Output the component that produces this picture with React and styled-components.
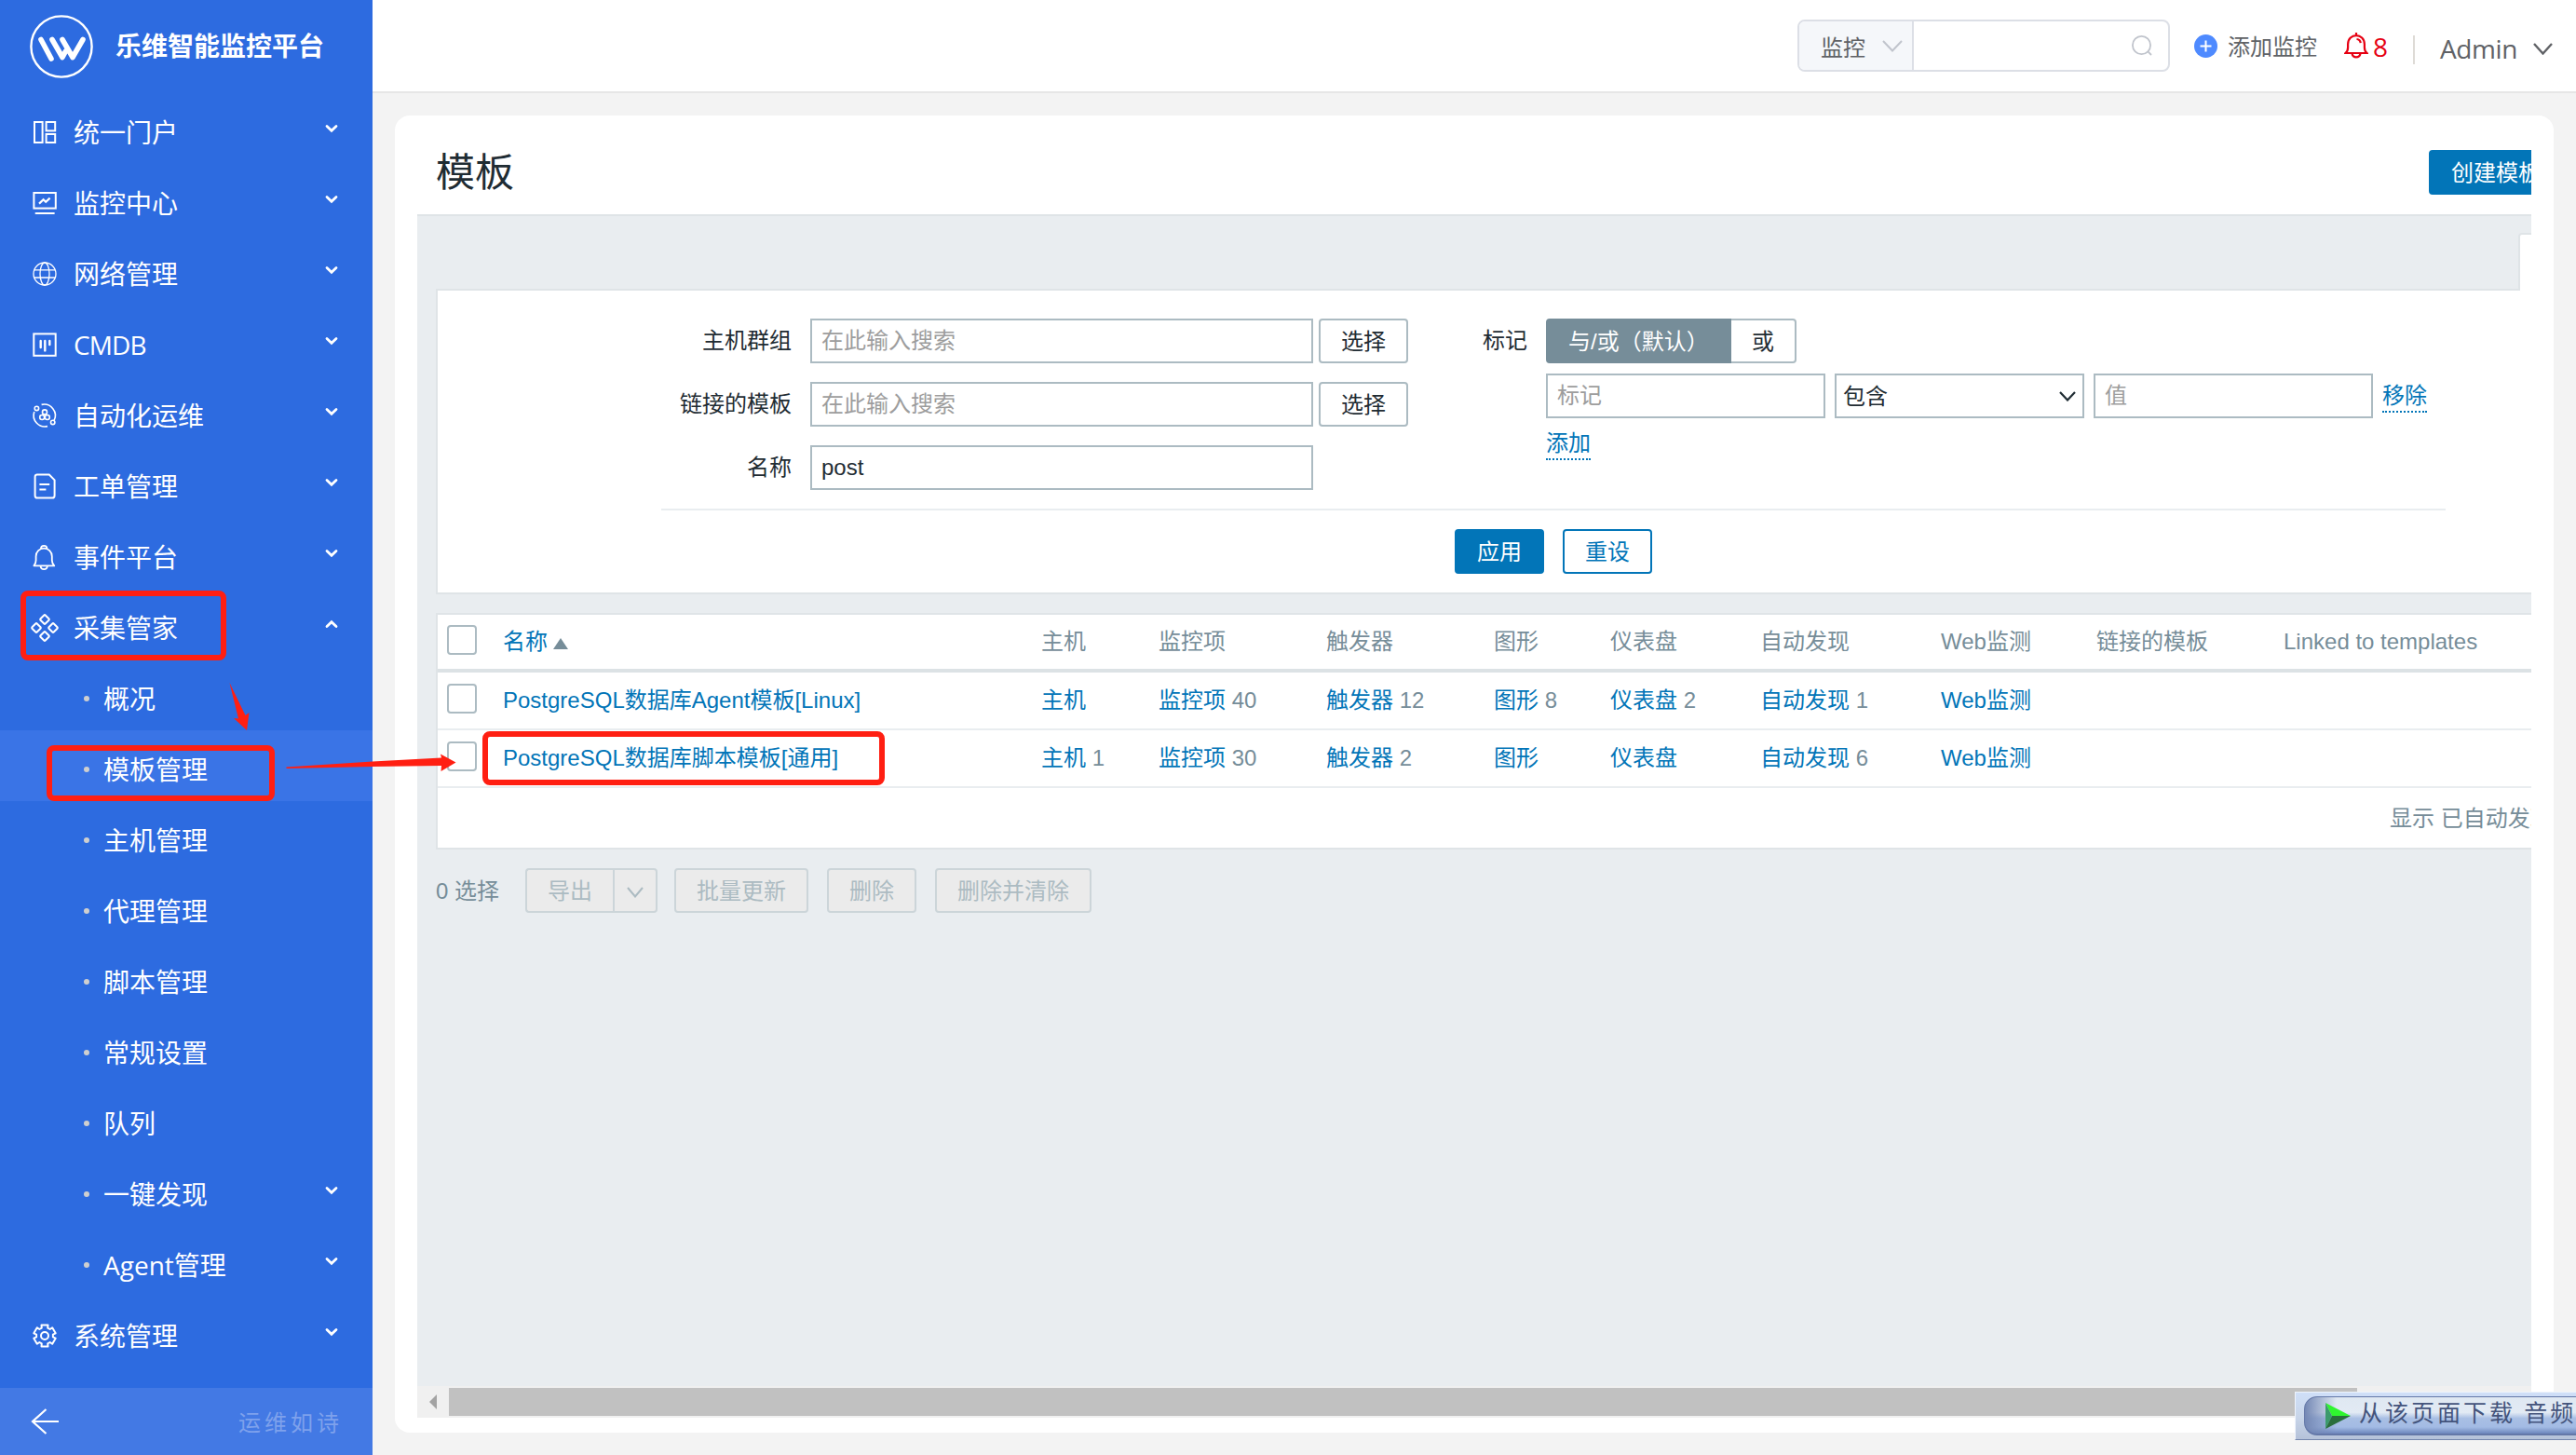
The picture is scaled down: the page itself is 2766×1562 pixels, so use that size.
import styled, { createGlobalStyle, css } from "styled-components";

const GlobalStyle = createGlobalStyle`
  * {
    box-sizing: border-box;
  }
  body {
    margin: 0;
    overflow: hidden;
    background: #f3f3f3;
    font-family: "Liberation Sans", "Noto Sans CJK SC", sans-serif;
    font-size: 24px;
  }
`;

const uiFont = css`
  font-family: "Open Sans", "Noto Sans CJK SC", sans-serif;
`;

const Page = styled.div`
  position: relative;
  display: flex;
  width: 2766px;
  height: 1562px;
  overflow: hidden;
`;

/* ---------- sidebar ---------- */

const Sidebar = styled.aside`
  ${uiFont}
  display: flex;
  flex-direction: column;
  flex: 0 0 400px;
  background: #2d6be0;
  color: #fff;
`;

const Brand = styled.div`
  display: flex;
  align-items: center;
  gap: 24px;
  height: 100px;
  padding-left: 32px;
  font-family: "Noto Sans CJK SC", sans-serif;
  font-size: 28px;
  font-weight: 700;
  line-height: 40px;
  white-space: nowrap;

  span {
    margin-top: -5px;
  }
`;

const MenuRow = styled.div`
  display: flex;
  align-items: center;
  height: 76px;
  padding: 0 36px 0 ${(p) => (p.$sub ? "90px" : "32px")};
  background: ${(p) => (p.$active ? "#3a74e6" : "transparent")};
`;

const MenuIcon = styled.svg`
  width: 32px;
  height: 32px;
  margin: 8px 15px 0 0;
  fill: none;
  stroke: currentColor;
  stroke-width: 2;
`;

const Dot = styled.i`
  width: 6px;
  height: 6px;
  margin: 7px 15px 0 0;
  border-radius: 50%;
  background: #cfcfcf;
`;

const MenuLabel = styled.span`
  flex: 1;
  padding-top: 8px;
  font-size: 28px;
  line-height: 40px;
  letter-spacing: ${(p) => (p.$latin ? "-0.9px" : "0")};
  white-space: nowrap;
`;

const MenuArrow = styled.svg`
  width: 16px;
  height: 10px;
  fill: none;
  stroke: #fff;
  stroke-width: 2.8;
  stroke-linecap: round;
  transform: ${(p) => (p.$open ? "rotate(180deg)" : "none")};
`;

const SidebarFooter = styled.div`
  display: flex;
  align-items: center;
  justify-content: space-between;
  height: 72px;
  margin-top: auto;
  padding: 0 32px 0 32px;
  background: #4379e4;
  color: #7ea1ec;
  line-height: 36px;
  letter-spacing: 4px;

  span {
    padding-top: 2px;
  }
`;

/* ---------- header ---------- */

const Main = styled.main`
  display: flex;
  flex-direction: column;
  flex: 1;
  min-width: 0;
`;

const Header = styled.header`
  ${uiFont}
  display: flex;
  align-items: center;
  justify-content: flex-end;
  height: 100px;
  padding-right: 25px;
  border-bottom: 2px solid #e6e6e6;
  background: #fff;
  color: #606266;
`;

const SearchGroup = styled.div`
  display: flex;
  width: 400px;
  height: 56px;
  margin-right: 26px;
  border: 2px solid #dcdfe6;
  border-radius: 8px;
  overflow: hidden;
`;

const SearchType = styled.div`
  display: flex;
  align-items: center;
  justify-content: space-between;
  width: 123px;
  padding: 0 10px 0 23px;
  border-right: 2px solid #dcdfe6;
  background: #f5f7fa;
`;

const SearchField = styled.div`
  display: flex;
  flex: 1;
  align-items: center;
  justify-content: flex-end;
  padding-right: 16px;
`;

const HeaderText = styled.span`
  font-size: ${(p) => p.$size || 24}px;
  line-height: 36px;
  padding-top: ${(p) => p.$top || 0}px;
  margin-right: ${(p) => p.$gap || 0}px;
  color: ${(p) => p.$color || "inherit"};
  letter-spacing: ${(p) => p.$spacing || 0}px;
`;

const HeaderIcon = styled.svg`
  margin-right: ${(p) => p.$gap || 0}px;
  flex: none;
`;

const Divider = styled.i`
  width: 2px;
  height: 31px;
  margin: 8px 27px 0 0;
  background: #dedbd6;
`;

/* ---------- content frame ---------- */

const Card = styled.section`
  display: flex;
  flex-direction: column;
  width: 2318px;
  height: 1414px;
  margin: 24px 0 0 24px;
  padding: 0 24px 16px;
  border-radius: 16px;
  background: #fff;
`;

const Frame = styled.div`
  flex: 1;
  overflow: hidden;
  background: #e9edf0;
`;

const FrameContent = styled.div`
  width: 2440px;
  color: #1f2c33;
`;

const TitleBar = styled.div`
  display: flex;
  align-items: center;
  justify-content: space-between;
  height: 108px;
  padding: 16px 136px 0 20px;
  border-bottom: 2px solid #dfe4e7;
  background: #fff;
`;

const Title = styled.h1`
  margin: 2px 0 0;
  font-size: 42px;
  font-weight: 400;
  line-height: 56px;
`;

const Button = styled.button`
  height: 48px;
  padding: 2px 22px 0;
  border: 2px solid ${(p) => p.$border || "#0275b8"};
  border-radius: 4px;
  background: ${(p) => p.$bg || "#fff"};
  color: ${(p) => p.$color || "#0275b8"};
  font: inherit;
  font-size: 24px;
  line-height: 40px;
  white-space: nowrap;
`;

const TabsBar = styled.div`
  display: flex;
  height: 78px;
  padding: 18px 20px 0 2256px;
`;

const FilterTab = styled.div`
  position: relative;
  width: 162px;
  height: 62px;
  border: 2px solid #dfe4e7;
  border-bottom: 0;
  border-radius: 4px 4px 0 0;
  background: #fff;
`;

const Panel = styled.div`
  width: 2400px;
  margin: 0 20px ${(p) => p.$gap || 0}px;
  border: 2px solid #dfe4e7;
  background: #fff;
`;

const Filter = styled.div`
  display: flex;
  height: 234px;
  padding-top: 30px;
`;

const FilterColumn = styled.div`
  display: flex;
  flex-direction: column;
  gap: 20px;
`;

const Field = styled.div`
  display: flex;
  align-items: flex-start;
`;

const FieldLabel = styled.label`
  width: ${(p) => p.$width}px;
  margin-right: 20px;
  text-align: right;
  line-height: 48px;
`;

const TextBox = styled.div`
  display: flex;
  align-items: center;
  justify-content: space-between;
  width: ${(p) => p.$width}px;
  height: 48px;
  margin-right: ${(p) => p.$gap || 0}px;
  padding: ${(p) => p.$top || 0}px ${(p) => (p.$select ? "7px" : "10px")} 0;
  border: 2px solid #acbbc2;
  color: ${(p) => (p.$filled ? "#1f2c33" : "#9d9d9d")};
  line-height: 36px;
`;

const TagControls = styled.div`
  display: flex;
  flex-direction: column;
  gap: 11px;
`;

const Inline = styled.div`
  display: flex;
`;

const Segment = styled.div`
  width: ${(p) => p.$width}px;
  height: 48px;
  border: 2px solid ${(p) => (p.$on ? "#768d99" : "#acbbc2")};
  border-left-width: ${(p) => (p.$on ? "2px" : "0")};
  border-radius: ${(p) => (p.$on ? "4px 0 0 4px" : "0 4px 4px 0")};
  background: ${(p) => (p.$on ? "#768d99" : "#fff")};
  color: ${(p) => (p.$on ? "#fff" : "#1f2c33")};
  padding-left: 22px;
  line-height: 45px;
  white-space: nowrap;
`;

const DottedLink = styled.a`
  align-self: flex-start;
  margin-top: ${(p) => p.$top}px;
  border-bottom: 2px dotted #0275b8;
  color: #0275b8;
  line-height: 33px;
`;

const FilterActions = styled.div`
  display: flex;
  justify-content: center;
  gap: 20px;
  width: 1916px;
  height: 90px;
  margin: 0 auto;
  padding-top: 20px;
  border-top: 2px solid #e9edf0;
`;

/* ---------- table ---------- */

const Row = styled.div`
  display: grid;
  grid-template-columns: 70px 578px 126px 180px 180px 125px 161px 194px 167px 201px 1fr;
  height: 62px;
  padding-top: ${(p) => (p.$head ? 11 : 12)}px;
  border-bottom: ${(p) => (p.$head ? "4px solid #dce2e5" : "2px solid #e9edf0")};
  color: #768d99;
  line-height: 36px;
  white-space: nowrap;

  a {
    color: #0275b8;
  }
`;

const Checkbox = styled.i`
  width: 32px;
  height: 32px;
  margin-left: 10px;
  border: 2px solid #acbbc2;
  border-radius: 4px;
`;

const SortMark = styled.i`
  display: inline-block;
  margin-left: 6px;
  border: 8px solid transparent;
  border-top: 0;
  border-bottom: 12px solid #768d99;
`;

const TableFooter = styled.div`
  height: 64px;
  padding: 15px 0 0 2096px;
  color: #768d99;
  line-height: 36px;
  white-space: nowrap;
`;

const ActionBar = styled.div`
  display: flex;
  align-items: center;
  gap: 20px;
  padding-left: 20px;
  color: #768d99;

  > span {
    margin-right: 8px;
    line-height: 36px;
    padding-top: 2px;
  }
`;

const Disabled = styled(Button).attrs({
  disabled: true,
  $bg: "#ebebeb",
  $border: "#ccd5d9",
  $color: "#acbbc2",
})``;

const SplitButton = styled.div`
  display: flex;
  margin-right: -2px;

  ${Disabled}:first-child {
    border-radius: 4px 0 0 4px;
    border-right: 0;
  }
  ${Disabled}:last-child {
    width: 48px;
    padding: 0;
    border-radius: 0 4px 4px 0;
  }
`;

const ScrollTrack = styled.div`
  display: flex;
  align-items: center;
  height: 34px;
  padding-left: 13px;
  background: #f0f0f0;
`;

const ScrollArrow = styled.i`
  border: 8px solid transparent;
  border-left: 0;
  border-right-color: #a3a3a3;
`;

const ScrollThumb = styled.div`
  width: 2049px;
  height: 30px;
  margin-left: 13px;
  background: #c1c1c1;
`;

/* ---------- overlays ---------- */

const RedBox = styled.div`
  position: absolute;
  left: ${(p) => p.$x}px;
  top: ${(p) => p.$y}px;
  width: ${(p) => p.$w}px;
  height: ${(p) => p.$h}px;
  border: 6px solid #ff1f12;
  border-radius: 8px;
`;

const RedArrows = styled.svg`
  position: absolute;
  left: 240px;
  top: 725px;
  fill: #ff1f12;
`;

const DownloadBar = styled.div`
  position: absolute;
  left: 2464px;
  top: 1494px;
  width: 310px;
  height: 52px;
  padding: 4px 0 0 9px;
  border: 1px solid #7486ad;
  border-top-color: #eef3fc;
  border-left-color: #eef3fc;
  background: linear-gradient(#cfdff8, #c9d6ea 50%, #b5c2d9);
`;

const DownloadPill = styled.div`
  display: flex;
  align-items: center;
  height: 42px;
  padding-left: 22px;
  border: 1px solid #6478a8;
  border-bottom-width: 2px;
  border-radius: 14px 0 0 14px;
  background: linear-gradient(90deg, #7488b5 0, rgba(116, 136, 181, 0) 34px),
    linear-gradient(#dfe8f2, #e2eaf4 42%, #a9bfe4 58%, #a3bbe4 82%, #6c86bd);
  color: #44547c;
  font-family: "Liberation Serif", "Noto Sans CJK SC", serif;
  font-size: 25px;
  line-height: 36px;
  letter-spacing: 3px;
  white-space: nowrap;

  svg {
    flex: none;
    margin-right: 9px;
  }

  span {
    margin-top: -3px;
  }
`;

/* six-tooth gear outline around 16,16 */
const gearPath = (() => {
  const pts = [];
  for (let i = 0; i < 6; i++) {
    [
      [-17, 12],
      [17, 12],
      [21, 9],
      [39, 9],
    ].forEach(([deg, r]) => {
      const a = ((i * 60 + deg - 90) * Math.PI) / 180;
      pts.push(`${(16 + r * Math.cos(a)).toFixed(2)} ${(16 + r * Math.sin(a)).toFixed(2)}`);
    });
  }
  return `M${pts.join("L")}Z`;
})();

const icons = {
  portal: (
    <>
      <rect x="5" y="5" width="8.6" height="22" />
      <rect x="17.6" y="5" width="9.6" height="9.4" />
      <rect x="17.6" y="18" width="9.6" height="9" />
    </>
  ),
  monitor: (
    <>
      <rect x="4.4" y="5" width="23.4" height="16.6" />
      <path d="M6.5 27h19.4" strokeLinecap="round" />
      <path d="M10 16.6l4.6-4.4 2.6 2.6 4.4-4.2" strokeWidth="2.2" />
    </>
  ),
  globe: (
    <g strokeWidth="1.3">
      <circle cx="16" cy="16" r="12" />
      <ellipse cx="16" cy="16" rx="5" ry="12" />
      <path d="M5 11.8h22M5 20h22" />
    </g>
  ),
  cmdb: (
    <>
      <rect x="4.3" y="4.4" width="23.4" height="23.4" />
      <path d="M11.7 12v7M16.3 12v10.4M21.3 12v4" strokeWidth="2.4" strokeLinecap="round" />
    </>
  ),
  auto: (
    <g strokeWidth="1.6">
      <path d="M12.6 4.4A12 12 0 0 1 26 21.6M4.8 12A12 12 0 0 0 19 27.6" />
      <circle cx="7.4" cy="8.4" r="2.2" />
      <circle cx="24.7" cy="23.4" r="2.2" />
      <circle cx="16" cy="12.4" r="2.5" />
      <circle cx="13.2" cy="18" r="2.5" />
      <circle cx="18.8" cy="18" r="2.5" />
    </g>
  ),
  order: (
    <>
      <path d="M7.6 3.5h13.2l5.8 5.8v16.6q0 2.6-2.6 2.6H8.2q-2.6 0-2.6-2.6V6q0-2.5 2-2.5z" />
      <path d="M10.4 14h10.8M10.4 19.4h7" />
    </>
  ),
  bell: (
    <g strokeWidth="1.8" strokeLinejoin="round">
      <path d="M4.4 25.4h21.8c-1.6-2-2.4-3.6-2.4-6v-4.2a8.6 8.6 0 0 0-17.2 0v4.2c0 2.4-.6 4-2.2 6z" />
      <path d="M12 7c0-4.2 6.4-4.2 6.4 0M11.6 26c.4 4.2 6.8 4.2 7.2 0" />
    </g>
  ),
  collect: (
    <>
      {[
        [16, 7],
        [7, 16],
        [25, 16],
        [16, 25],
      ].map(([x, y]) => (
        <rect
          key={`${x}-${y}`}
          x={x - 3.7}
          y={y - 3.7}
          width="7.4"
          height="7.4"
          rx="1"
          transform={`rotate(45 ${x} ${y})`}
        />
      ))}
    </>
  ),
  system: (
    <g strokeLinejoin="round">
      <path d={gearPath} />
      <circle cx="16" cy="16" r="4" />
    </g>
  ),
};

const menu = [
  { label: "统一门户", icon: "portal", arrow: true },
  { label: "监控中心", icon: "monitor", arrow: true },
  { label: "网络管理", icon: "globe", arrow: true },
  { label: "CMDB", icon: "cmdb", arrow: true, latin: true },
  { label: "自动化运维", icon: "auto", arrow: true },
  { label: "工单管理", icon: "order", arrow: true },
  { label: "事件平台", icon: "bell", arrow: true },
  { label: "采集管家", icon: "collect", arrow: true, open: true },
  { label: "概况" },
  { label: "模板管理", active: true },
  { label: "主机管理" },
  { label: "代理管理" },
  { label: "脚本管理" },
  { label: "常规设置" },
  { label: "队列" },
  { label: "一键发现", arrow: true },
  { label: "Agent管理", arrow: true },
  { label: "系统管理", icon: "system", arrow: true },
];

const columns = ["主机", "监控项", "触发器", "图形", "仪表盘", "自动发现", "Web监测"];

const templates = [
  { name: "PostgreSQL数据库Agent模板[Linux]", counts: ["", 40, 12, 8, 2, 1, ""] },
  { name: "PostgreSQL数据库脚本模板[通用]", counts: [1, 30, 2, "", "", 6, ""] },
];

function Chevron({ width, height, color, stroke = 2 }) {
  return (
    <svg width={width} height={height} viewBox={`0 0 ${width} ${height}`} fill="none">
      <path
        d={`M1 1L${width / 2} ${height - 1.5}L${width - 1} 1`}
        stroke={color}
        strokeWidth={stroke}
      />
    </svg>
  );
}

function SideMenu() {
  return (
    <Sidebar>
      <Brand>
        <svg width="68" height="68" viewBox="0 0 68 68" fill="none" stroke="#fff">
          <circle cx="34" cy="34" r="32.6" strokeWidth="2.4" />
          <path
            d="M12 26.500L23 47M24 26.500L35 45.500L38.500 39M35 26.500L46 45.500L57 26.500"
            strokeWidth="5.600"
            strokeLinecap="round"
            strokeLinejoin="round"
          />
        </svg>
        <span>乐维智能监控平台</span>
      </Brand>
      {menu.map((item) => (
        <MenuRow key={item.label} $sub={!item.icon} $active={item.active}>
          {item.icon ? <MenuIcon viewBox="0 0 32 32">{icons[item.icon]}</MenuIcon> : <Dot />}
          <MenuLabel $latin={item.latin}>{item.label}</MenuLabel>
          {item.arrow && (
            <MenuArrow $open={item.open} viewBox="0 0 16 10">
              <path d="M3 2.400l5 4.800 5-4.800" />
            </MenuArrow>
          )}
        </MenuRow>
      ))}
      <SidebarFooter>
        <svg width="32" height="32" viewBox="0 0 32 32" fill="none" stroke="#fff" strokeWidth="2.2">
          <path d="M17.500 3L3 16l14.500 13M3 16h28" />
        </svg>
        <span>运维如诗</span>
      </SidebarFooter>
    </Sidebar>
  );
}

function TopBar() {
  return (
    <Header>
      <SearchGroup>
        <SearchType>
          监控
          <Chevron width={22} height={13} color="#c0c4cc" />
        </SearchType>
        <SearchField>
          <svg width="24" height="24" viewBox="0 0 24 24" fill="none" stroke="#c0c4cc" strokeWidth="1.8">
            <circle cx="11.5" cy="11.5" r="9.6" />
            <path d="M18.2 18.2l3.8 3.8" />
          </svg>
        </SearchField>
      </SearchGroup>
      <HeaderIcon $gap={11} width="25" height="25" viewBox="0 0 25 25">
        <circle cx="12.5" cy="12.5" r="12.5" fill="#4e8aff" />
        <path d="M12.500 6.500v12M6.500 12.500h12" stroke="#fff" strokeWidth="2" />
      </HeaderIcon>
      <HeaderText $gap={29} $top={1}>
        添加监控
      </HeaderText>
      <HeaderIcon
        $gap={5}
        width="26"
        height="30"
        viewBox="0 0 26 30"
        fill="none"
        stroke="#e60012"
        strokeWidth="2.2"
      >
        <path d="M13 1v3M1.500 23h23c-2-1.600-2.600-3.600-2.600-6v-3.500c0-12.400-17.800-12.400-17.800 0V17c0 2.400-.6 4.400-2.600 6zM8.500 23.500c1 5.200 8 5.200 9 0" />
        <path d="M13.500 8c2.600.2 4 1.800 4.200 4.200" />
      </HeaderIcon>
      <HeaderText $size={28} $color="#e60012" $gap={27} $top={2}>
        8
      </HeaderText>
      <Divider />
      <HeaderText $size={28} $gap={17} $top={5} $spacing={-0.4}>
        Admin
      </HeaderText>
      <HeaderIcon as="span">
        <Chevron width={21} height={13} color="#606266" stroke={2.4} />
      </HeaderIcon>
    </Header>
  );
}

function FilterForm() {
  return (
    <Panel $gap={20}>
      <Filter>
        <FilterColumn>
          {["主机群组", "链接的模板"].map((label) => (
            <Field key={label}>
              <FieldLabel $width={380}>{label}</FieldLabel>
              <TextBox $width={540} $gap={6}>
                在此输入搜索
              </TextBox>
              <Button $border="#acbbc2" $color="#1f2c33">
                选择
              </Button>
            </Field>
          ))}
          <Field>
            <FieldLabel $width={380}>名称</FieldLabel>
            <TextBox $width={540} $filled>
              post
            </TextBox>
          </Field>
        </FilterColumn>
        <Field>
          <FieldLabel $width={128}>标记</FieldLabel>
          <TagControls>
            <Inline>
              <Segment $on $width={199}>
                与/或（默认）
              </Segment>
              <Segment $width={70}>或</Segment>
            </Inline>
            <Inline>
              <TextBox $width={300} $gap={10}>
                标记
              </TextBox>
              <TextBox $width={268} $gap={10} $filled $select $top={1}>
                包含
                <Chevron width={18} height={11} color="#1f2c33" stroke={2.2} />
              </TextBox>
              <TextBox $width={300} $gap={10}>
                值
              </TextBox>
              <DottedLink $top={7}>移除</DottedLink>
            </Inline>
            <DottedLink $top={-1}>添加</DottedLink>
          </TagControls>
        </Field>
      </Filter>
      <FilterActions>
        <Button $bg="#0275b8" $color="#fff">
          应用
        </Button>
        <Button>重设</Button>
      </FilterActions>
    </Panel>
  );
}

function TemplateTable() {
  return (
    <Panel $gap={20}>
      <Row $head>
        <Checkbox />
        <span>
          <a>名称</a>
          <SortMark />
        </span>
        {columns.map((col) => (
          <span key={col}>{col}</span>
        ))}
        <span>链接的模板</span>
        <span>Linked to templates</span>
      </Row>
      {templates.map((tpl) => (
        <Row key={tpl.name}>
          <Checkbox />
          <a>{tpl.name}</a>
          {columns.map((col, i) => (
            <span key={col}>
              <a>{col}</a> {tpl.counts[i]}
            </span>
          ))}
        </Row>
      ))}
      <TableFooter>显示 已自动发现</TableFooter>
    </Panel>
  );
}

function App() {
  return (
    <Page>
      <GlobalStyle />
      <SideMenu />
      <Main>
        <TopBar />
        <Card>
          <Frame>
            <FrameContent>
              <TitleBar>
                <Title>模板</Title>
                <Button $bg="#0275b8" $color="#fff">
                  创建模板
                </Button>
              </TitleBar>
              <TabsBar>
                <FilterTab />
              </TabsBar>
              <FilterForm />
              <TemplateTable />
              <ActionBar>
                <span>0 选择</span>
                <SplitButton>
                  <Disabled>导出</Disabled>
                  <Disabled>
                    <Chevron width={18} height={12} color="#acbbc2" />
                  </Disabled>
                </SplitButton>
                <Disabled>批量更新</Disabled>
                <Disabled>删除</Disabled>
                <Disabled>删除并清除</Disabled>
              </ActionBar>
            </FrameContent>
          </Frame>
          <ScrollTrack>
            <ScrollArrow />
            <ScrollThumb />
          </ScrollTrack>
        </Card>
      </Main>

      <RedBox $x={22} $y={634} $w={221} $h={75} />
      <RedBox $x={50} $y={800} $w={245} $h={60} />
      <RedBox $x={518} $y={785} $w={432} $h={58} />
      <RedArrows width="260" height="110" viewBox="240 725 260 110">
        <path d="M246.500 733L263.500 768L267.500 765L265 784L251 771L256 771.500Z" />
        <path d="M307.500 823.500L400 817.500L474 813.500L473 809.500L489.500 818.600L473.500 828L474 822L400 823L307.500 825Z" />
      </RedArrows>

      <DownloadBar>
        <DownloadPill>
          <svg width="27" height="28" viewBox="0 0 27 28">
            <path d="M0 0L27 14L7 14Z" fill="#2ff52f" />
            <path d="M0 0L7 14L0 28Z" fill="#3c9a6c" />
            <path d="M0 28L7 14L27 14Z" fill="#2a6e3c" />
          </svg>
          <span>从该页面下载 音频</span>
        </DownloadPill>
      </DownloadBar>
    </Page>
  );
}

export default App;
